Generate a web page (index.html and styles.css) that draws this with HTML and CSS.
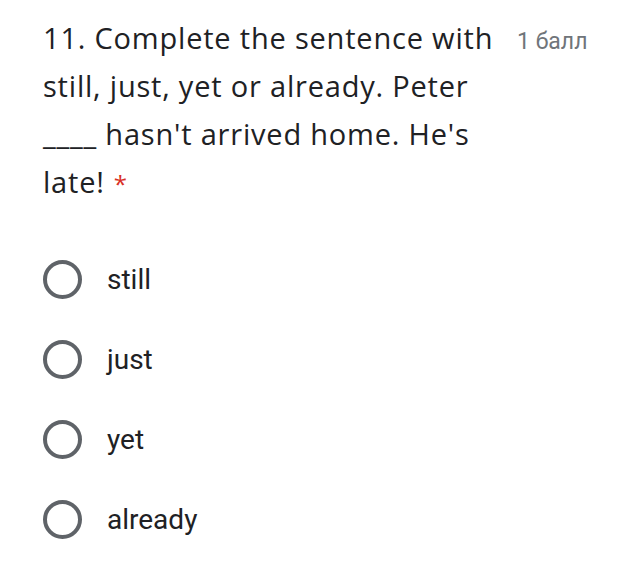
FILE: index.html
```html
<!DOCTYPE html>
<html lang="ru">
<head>
    <meta charset="UTF-8">
    <title>Вопрос 11</title>
    <link rel="stylesheet" href="styles.css">
</head>
<body>
    <div class="question">
        <div class="question-head">
            <div class="question-title">11. Complete the sentence with still, just, yet or already. Peter ____ hasn't arrived home. He's late!<span class="required">*</span></div>
            <div class="points">1 балл</div>
        </div>

        <div class="options">
            <label class="option"><span class="radio"></span><span class="option-text">still</span></label>
            <label class="option"><span class="radio"></span><span class="option-text">just</span></label>
            <label class="option"><span class="radio"></span><span class="option-text">yet</span></label>
            <label class="option"><span class="radio"></span><span class="option-text">already</span></label>
        </div>
    </div>
</body>
</html>
```

FILE: styles.css
```css
body {
    margin: 0;
    background-color: #fff;
    font-family: Roboto, "Noto Sans", sans-serif;
    color: #202124;
}
.question {
    padding: 14px 20px 0 43px;
}
.question-head {
    display: flex;
    align-items: flex-start;
}
.question-title {
    width: 474px;
    flex-shrink: 0;
    font-family: "Open Sans", Roboto, sans-serif;
    font-size: 29px;
    line-height: 48px;
    letter-spacing: 0.8px;
}
.required {
    margin-left: 9px;
    color: #d93025;
    font-size: 24px;
    line-height: 24px;
    letter-spacing: 0;
}
.points {
    margin-top: 13px;
    font-size: 23px;
    line-height: 30px;
    color: #70757a;
    white-space: nowrap;
}
.options {
    margin-top: 33px;
    display: flex;
    flex-direction: column;
}
.option {
    display: flex;
    align-items: center;
    height: 80px;
}
.radio {
    width: 31px;
    height: 31px;
    border: 4px solid #5f6368;
    border-radius: 50%;
    flex-shrink: 0;
}
.option-text {
    margin-left: 25px;
    font-size: 28px;
    color: #202124;
}
```
